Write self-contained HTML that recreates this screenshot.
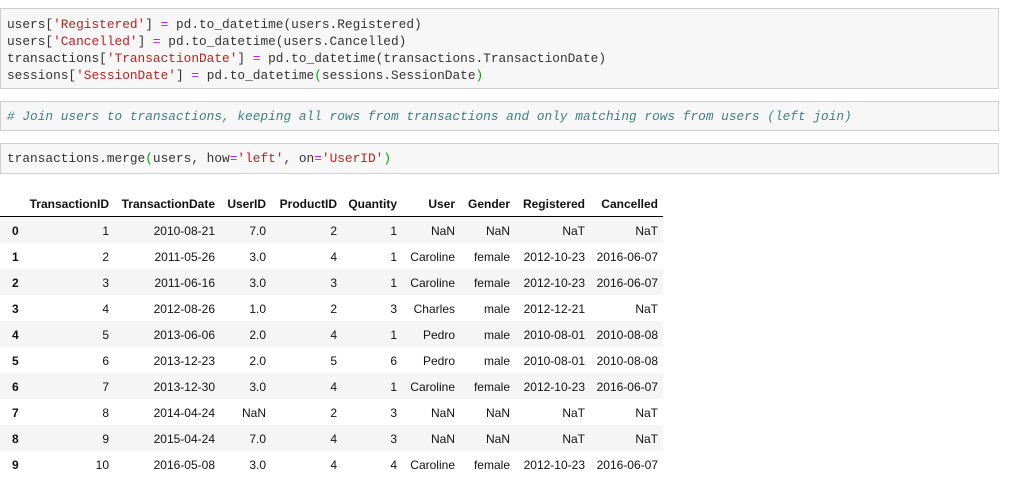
<!DOCTYPE html>
<html><head><style>
body{margin:0;width:1017px;height:481px;background:#fff;position:relative;overflow:hidden}
.box{position:absolute;left:0;width:999px;background:#f7f7f7;border:1px solid #cfcfcf;box-sizing:border-box;font-family:"Liberation Mono",monospace;font-size:12.8px;line-height:17px;color:#333;padding-left:6px;white-space:pre}
.s{color:#ba2121}.o{color:#aa22ff}.p{color:#0a0}.c{color:#408080;font-style:italic}
.t{position:absolute;font-family:"Liberation Sans",Arial,sans-serif;font-size:12px;color:#111}
.row{position:absolute;left:0;width:663px;height:26px}
.g{background:#f5f5f5}
.cell{position:absolute;top:1px;line-height:26px;text-align:right;white-space:nowrap}
.b{font-weight:bold}
</style></head><body>
<div class="box" style="top:8px;height:81px;padding-top:7px">users[<span class="s">'Registered'</span>] <span class="o">=</span> pd.to_datetime(users.Registered)
users[<span class="s">'Cancelled'</span>] <span class="o">=</span> pd.to_datetime(users.Cancelled)
transactions[<span class="s">'TransactionDate'</span>] <span class="o">=</span> pd.to_datetime(transactions.TransactionDate)
sessions[<span class="s">'SessionDate'</span>] <span class="o">=</span> pd.to_datetime<span class="p">(</span>sessions.SessionDate<span class="p">)</span></div>
<div class="box" style="top:101px;height:30px;padding-top:6px"><span class="c"># Join users to transactions, keeping all rows from transactions and only matching rows from users (left join)</span></div>
<div class="box" style="top:143px;height:31px;padding-top:6px">transactions.merge<span class="p">(</span>users, how<span class="o">=</span><span class="s">'left'</span>, on<span class="o">=</span><span class="s">'UserID'</span><span class="p">)</span></div>
<div id="tbl"></div>
<script>
var rights=[null,109,215,266,337,397,455,510,585,658];
var hdr=["","TransactionID","TransactionDate","UserID","ProductID","Quantity","User","Gender","Registered","Cancelled"];
var data=[
["0","1","2010-08-21","7.0","2","1","NaN","NaN","NaT","NaT"],
["1","2","2011-05-26","3.0","4","1","Caroline","female","2012-10-23","2016-06-07"],
["2","3","2011-06-16","3.0","3","1","Caroline","female","2012-10-23","2016-06-07"],
["3","4","2012-08-26","1.0","2","3","Charles","male","2012-12-21","NaT"],
["4","5","2013-06-06","2.0","4","1","Pedro","male","2010-08-01","2010-08-08"],
["5","6","2013-12-23","2.0","5","6","Pedro","male","2010-08-01","2010-08-08"],
["6","7","2013-12-30","3.0","4","1","Caroline","female","2012-10-23","2016-06-07"],
["7","8","2014-04-24","NaN","2","3","NaN","NaN","NaT","NaT"],
["8","9","2015-04-24","7.0","4","3","NaN","NaN","NaT","NaT"],
["9","10","2016-05-08","3.0","4","4","Caroline","female","2012-10-23","2016-06-07"]];
var h='<div class="t" style="left:0;top:0;width:663px;height:481px">';
h+='<div class="row b" style="top:190px">';
for(var j=1;j<10;j++)h+='<div class="cell" style="right:'+(663-rights[j])+'px">'+hdr[j]+'</div>';
h+='</div><div style="position:absolute;left:0;top:216px;width:663px;height:1px;background:#000"></div>';
for(var i=0;i<10;i++){h+='<div class="row'+(i%2==0?' g':'')+'" style="top:'+(217+i*26)+'px">';
h+='<div class="cell b" style="left:12px;text-align:left">'+data[i][0]+'</div>';
for(var j=1;j<10;j++)h+='<div class="cell" style="right:'+(663-rights[j])+'px">'+data[i][j]+'</div>';
h+='</div>';}
h+='</div>';
document.getElementById('tbl').innerHTML=h;
</script>
</body></html>
